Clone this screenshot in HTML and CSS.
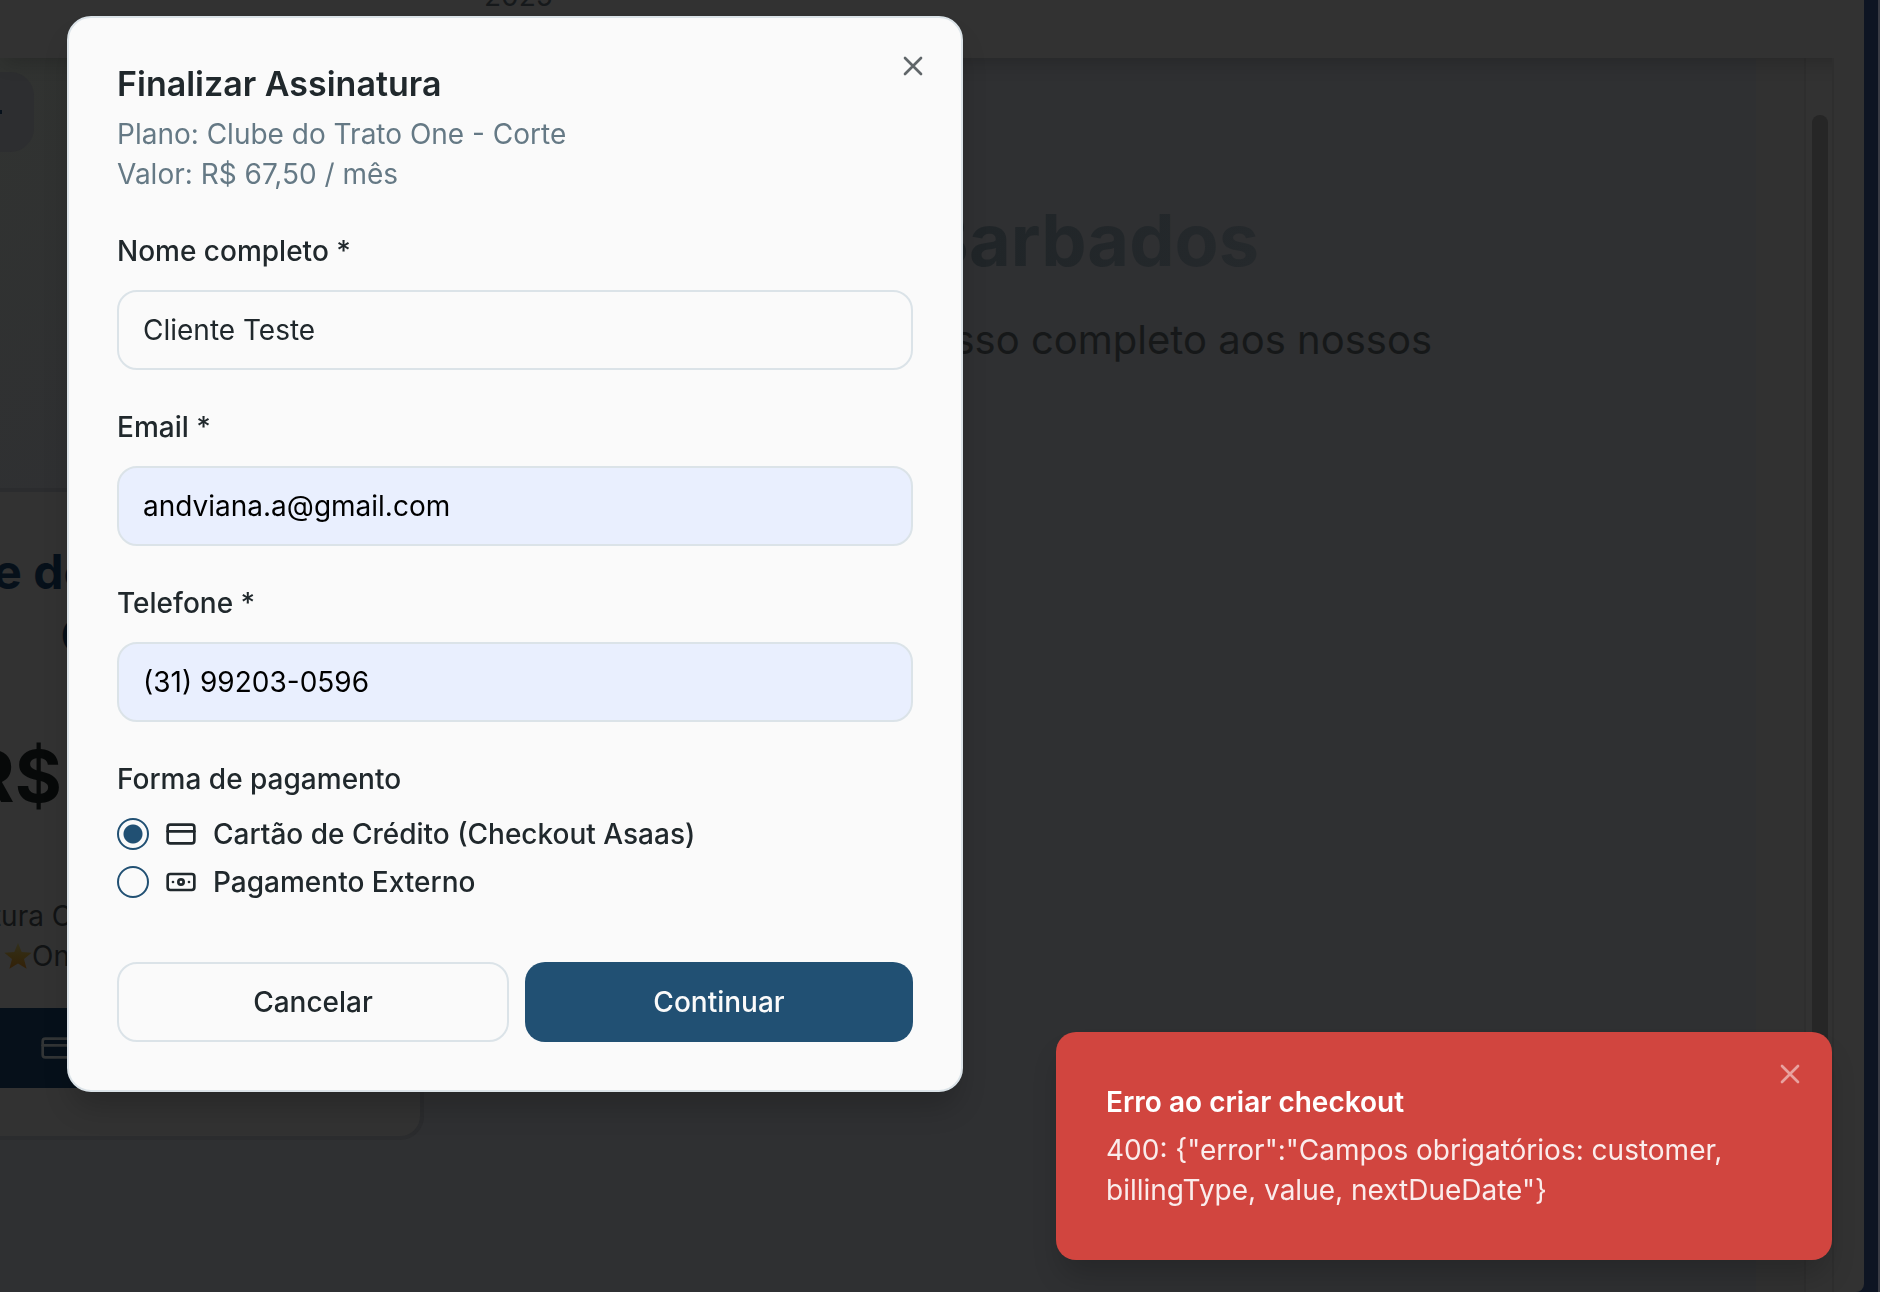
FILE: index.html
```html
<!DOCTYPE html>
<html lang="pt-BR">
<head>
<meta charset="utf-8">
<meta name="viewport" content="width=device-width, initial-scale=1">
<title>Finalizar Assinatura</title>
<link rel="stylesheet" href="styles.css">
</head>
<body>
<div class="window">
  <div class="page">
    <header class="topbar"><span class="year">2025</span></header>
    <div class="scroller">
      <main class="content">
        <div class="pill"><span class="pill-mark"></span></div>
        <section class="hero">
          <h1 class="hero-title">Barbados</h1>
          <p class="hero-text">acesso completo aos nossos</p>
        </section>
        <article class="plan">
          <h2 class="plan-title">Clube do Trato One -<br>Corte</h2>
          <p class="plan-price">R$ 67,50</p>
          <div class="plan-text">
            <p>Assinatura Clube</p>
            <p class="plan-star">
              <svg width="28" height="28" viewBox="0 0 28 28" aria-hidden="true"><defs><linearGradient id="star" x1="0" y1="0" x2="0" y2="1"><stop offset="0" stop-color="#33301c"/><stop offset=".5" stop-color="#33290f"/><stop offset="1" stop-color="#332008"/></linearGradient></defs><path fill="url(#star)" d="M14 1l3.700 9.100 10 .6-7.700 6.300 2.600 9.800L14 21.400l-8.600 5.400L8 17 .3 10.700l10-.6z"/></svg>
              One
            </p>
          </div>
          <button class="plan-button" type="button" aria-label="Assinar">
            <svg class="icon" viewBox="0 0 24 24" aria-hidden="true"><rect width="20" height="14" x="2" y="5" rx="2"/><path d="M2 10h20"/></svg>
          </button>
        </article>
      </main>
      <div class="scrollbar"><div class="thumb"></div></div>
      <div class="gutter"></div>
    </div>
  </div>
  <div class="edge"></div>
</div>

<div class="dialog" role="dialog" aria-labelledby="dialog-title">
  <button class="dialog-close" type="button" aria-label="Fechar">
    <svg class="icon" viewBox="0 0 24 24" aria-hidden="true"><path d="M18 6 6 18M6 6l12 12"/></svg>
  </button>
  <h2 class="dialog-title" id="dialog-title">Finalizar Assinatura</h2>
  <p class="dialog-text">Plano: Clube do Trato One - Corte<br>Valor: R$ 67,50 / mês</p>
  <form class="form">
    <div class="field">
      <label for="name">Nome completo *</label>
      <input class="input" id="name" type="text" value="Cliente Teste">
    </div>
    <div class="field">
      <label for="email">Email *</label>
      <input class="input filled" id="email" type="email" value="andviana.a@gmail.com">
    </div>
    <div class="field">
      <label for="phone">Telefone *</label>
      <input class="input filled" id="phone" type="tel" value="(31) 99203-0596">
    </div>
    <fieldset class="payment">
      <legend>Forma de pagamento</legend>
      <div class="options">
        <label class="option">
          <input class="radio" type="radio" name="payment" checked>
          <svg class="icon" viewBox="0 0 24 24" aria-hidden="true"><rect width="20" height="14" x="2" y="5" rx="2"/><path d="M2 10h20"/></svg>
          Cartão de Crédito (Checkout Asaas)
        </label>
        <label class="option">
          <input class="radio" type="radio" name="payment">
          <svg class="icon" viewBox="0 0 24 24" aria-hidden="true"><rect width="20" height="12" x="2" y="6" rx="2"/><circle cx="12" cy="12" r="2"/><path d="M6 12h.01M18 12h.01"/></svg>
          Pagamento Externo
        </label>
      </div>
    </fieldset>
    <div class="actions">
      <button class="button outline" type="button">Cancelar</button>
      <button class="button primary" type="button">Continuar</button>
    </div>
  </form>
</div>

<div class="toast" role="alert">
  <button class="toast-close" type="button" aria-label="Fechar aviso">
    <svg class="icon" viewBox="0 0 24 24" aria-hidden="true"><path d="M18 6 6 18M6 6l12 12"/></svg>
  </button>
  <p class="toast-title">Erro ao criar checkout</p>
  <p class="toast-text">400: {"error":"Campos obrigatórios: customer, billingType, value, nextDueDate"}</p>
</div>
</body>
</html>
```
FILE: styles.css
```css
* { box-sizing: border-box; }

body, h1, h2, p { margin: 0; }

body {
  height: 100vh;
  overflow: hidden;
  background: #323232;
  color: #20282c;
  font: 28px/40px Inter, "Liberation Sans", sans-serif;
}

button, input { font: inherit; color: inherit; }

button { cursor: pointer; }

.icon {
  display: block;
  flex: none;
  width: 32px;
  height: 32px;
  fill: none;
  stroke: currentColor;
  stroke-width: 2;
  stroke-linecap: round;
  stroke-linejoin: round;
}

/* Dimmed page */
.window {
  display: flex;
  height: 100%;
  background: #0e1523;
}

.page {
  flex: 1;
  display: flex;
  flex-direction: column;
  min-width: 0;
  overflow: hidden;
  background: #323232;
  border-bottom-right-radius: 8px;
}

.edge {
  width: 16px;
  border-right: 2px solid #3a3c45;
}

.topbar {
  position: relative;
  flex: none;
  height: 58px;
  padding-left: 484px;
  color: #16191b;
  background: #323232;
  box-shadow: 0 8px 20px -4px rgba(0, 0, 0, .2);
  clip-path: inset(0 32px -40px 0);
}

.year { display: block; margin-top: -24px; }

.scroller {
  flex: 1;
  display: flex;
  min-height: 0;
}

.content {
  flex: 1;
  min-width: 0;
  padding-top: 14px;
  background: linear-gradient(to bottom right, #313331, #2f3032 20%);
  border-right: 48px solid #313131;
}

.pill {
  display: flex;
  align-items: center;
  width: 34px;
  height: 80px;
  border-radius: 0 24px 24px 0;
  background: #2d2e30;
}

.pill-mark {
  width: 2px;
  height: 4px;
  background: #06101a;
}

.hero {
  display: flex;
  flex-direction: column;
  align-items: flex-end;
  height: 336px;
  padding-top: 48px;
}

.hero-title {
  margin-right: 497px;
  font-size: 72px;
  line-height: 80px;
  font-weight: 700;
  color: transparent;
  background: linear-gradient(to right, #1f2427, #25292c);
  background-clip: text;
}

.hero-text {
  margin: 32px 324px 0 0;
  font-size: 40px;
  line-height: 56px;
  color: #161819;
}

.plan {
  width: 588px;
  margin-left: -164px;
  padding-bottom: 48px;
  border: 4px solid #2b2c2e;
  border-radius: 24px;
  background: #323232;
}

.plan-title {
  padding: 48px 8px 0 0;
  text-align: center;
  font-size: 48px;
  line-height: 64px;
  font-weight: 700;
  color: #06101a;
}

.plan-price {
  padding: 68px 16px 80px 0;
  text-align: center;
  font-size: 72px;
  line-height: 80px;
  font-weight: 700;
  color: #070909;
}

.plan-text {
  height: 112px;
  padding-left: 64px;
  color: #111314;
}

.plan-star {
  display: flex;
  align-items: center;
  padding-left: 100px;
}

.plan-button {
  display: flex;
  align-items: center;
  width: 100%;
  height: 80px;
  padding: 0 200px;
  border: 0;
  color: #323536;
  background: #06101a;
}

.scrollbar {
  width: 30px;
  padding: 57px 6px 0;
  border: solid #2e2e2e;
  border-width: 0 2px;
  background: #323232;
}

.thumb {
  width: 16px;
  height: 80%;
  border-radius: 8px;
  background: #262626;
}

.gutter { width: 30px; }

/* Dialog */
.dialog {
  position: fixed;
  top: 16px;
  left: 67px;
  width: 896px;
  max-width: calc(100% - 67px);
  padding: 48px;
  border: 2px solid #dbe3e8;
  border-radius: 24px;
  background: #fafafa;
  box-shadow: 0 20px 30px -6px rgba(0, 0, 0, .2);
}

.dialog-close {
  position: absolute;
  top: 32px;
  right: 32px;
  padding: 0;
  border: 0;
  background: none;
  opacity: .7;
}

.dialog-title {
  font-size: 34px;
  line-height: 36px;
  font-weight: 600;
}

.dialog-text {
  margin-top: 12px;
  color: #657985;
}

.form {
  display: flex;
  flex-direction: column;
  gap: 32px;
  margin-top: 32px;
}

.field {
  display: flex;
  flex-direction: column;
  gap: 14px;
  line-height: 50px;
  font-weight: 500;
}

.input {
  width: 100%;
  height: 80px;
  padding: 0 24px;
  border: 2px solid #dbe3e8;
  border-radius: 20px;
  background: #fafafa;
  font-weight: 400;
}

.filled {
  color: #000;
  background: #e9effe;
}

.payment {
  margin: 0;
  padding: 0;
  border: 0;
  line-height: 50px;
  font-weight: 500;
}

.payment legend { padding: 0; }

.options {
  display: flex;
  flex-direction: column;
  gap: 16px;
  padding-top: 14px;
}

.option {
  display: flex;
  align-items: center;
  gap: 16px;
  height: 32px;
  line-height: 40px;
}

.radio {
  appearance: none;
  width: 32px;
  height: 32px;
  margin: 0;
  border: 2px solid #215073;
  border-radius: 50%;
}

.radio:checked { background: radial-gradient(circle, #215073 9px, transparent 10px); }

.actions {
  display: flex;
  gap: 16px;
  padding-top: 32px;
}

.button {
  flex: 1;
  height: 80px;
  padding: 0 32px;
  border: 0;
  border-radius: 20px;
  font-weight: 500;
}

.outline {
  border: 2px solid #dbe3e8;
  background: #fafafa;
}

.primary {
  color: #fafafa;
  background: #215073;
}

/* Toast */
.toast {
  position: fixed;
  right: 48px;
  bottom: 32px;
  width: 776px;
  max-width: calc(100% - 48px);
  padding: 50px;
  border-radius: 20px;
  color: #fff;
  background: #d1453f;
  box-shadow: 0 20px 30px -6px rgba(0, 0, 0, .2);
}

.toast-close {
  position: absolute;
  top: 26px;
  right: 26px;
  padding: 0;
  border: 0;
  background: none;
  opacity: .5;
}

.toast-title { font-weight: 600; }

.toast-text {
  margin-top: 8px;
  padding-right: 16px;
  opacity: .9;
}
```
